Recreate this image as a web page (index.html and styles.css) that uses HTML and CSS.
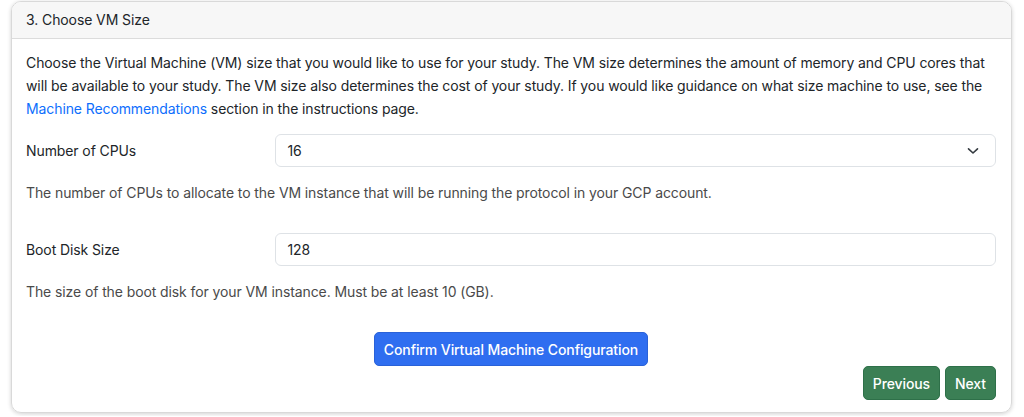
FILE: index.html
```html
<!DOCTYPE html>
<html>
<head>
<meta charset="utf-8">
<link rel="stylesheet" href="styles.css">
</head>
<body>
<div class="card">
  <div class="card-header">3. Choose VM Size</div>
  <div class="card-body">
    <p class="intro">Choose the Virtual Machine (VM) size that you would like to use for your study. The VM size determines the amount of memory and CPU cores that will be available to your study. The VM size also determines the cost of your study. If you would like guidance on what size machine to use, see the <a href="#">Machine Recommendations</a> section in the instructions page.</p>

    <div class="form-row">
      <label class="form-label">Number of CPUs</label>
      <div class="select">
        <span>16</span>
        <svg class="chev" width="12" height="8" viewBox="0 0 12 8"><path d="M1.5 1.8 L6 6 L10.5 1.8" fill="none" stroke="#343a40" stroke-width="1.6" stroke-linecap="round" stroke-linejoin="round"/></svg>
      </div>
    </div>
    <p class="help help-cpu">The number of CPUs to allocate to the VM instance that will be running the protocol in your GCP account.</p>

    <div class="form-row row-disk">
      <label class="form-label">Boot Disk Size</label>
      <div class="input">128</div>
    </div>
    <p class="help help-disk">The size of the boot disk for your VM instance. Must be at least 10 (GB).</p>

    <div class="confirm-wrap">
      <button class="btn btn-primary">Confirm Virtual Machine Configuration</button>
    </div>
    <div class="nav">
      <button class="btn btn-success">Previous</button>
      <button class="btn btn-success">Next</button>
    </div>
  </div>
</div>
</body>
</html>
```

FILE: styles.css
```css
html, body {
  margin: 0;
  padding: 0;
  background: #ffffff;
}
body {
  font-family: Inter, "Liberation Sans", Arial, sans-serif;
  font-size: 14px;
  letter-spacing: -0.1px;
  color: #212529;
  padding: 1px 12px 3px 11px;
}
.card {
  border: 1px solid #d9d9d9;
  border-radius: 10px;
  box-shadow: 0 1px 4px rgba(0,0,0,0.18);
  overflow: hidden;
  height: 412px;
  box-sizing: border-box;
}
.card-header {
  background: #f7f7f7;
  border-bottom: 1px solid #dcdcdc;
  padding: 7px 14px 8px;
  line-height: 21px;
}
.card-body {
  padding: 12px 15px 12px 14px;
  display: flex;
  flex-direction: column;
}
.intro {
  margin: 0;
  line-height: 23px;
}
.intro a {
  color: #0d6efd;
  text-decoration: none;
}
.form-row {
  display: grid;
  grid-template-columns: calc(25% - 18px) 1fr;
  column-gap: 24px;
  align-items: center;
  margin-top: 14px;
}
.row-disk {
  margin-top: 29px;
}
.form-label {
  line-height: 21px;
}
.select, .input {
  height: 33px;
  box-sizing: border-box;
  border: 1px solid #dee2e6;
  border-radius: 6px;
  padding: 0 12px;
  display: flex;
  align-items: center;
  justify-content: space-between;
  background: #fff;
}
.chev {
  margin-right: 4px;
}
.help {
  margin: 14px 0 0;
  line-height: 23px;
  color: #4a4a4a;
}
.confirm-wrap {
  display: flex;
  justify-content: center;
  margin-top: 29px;
}
.btn {
  font-family: inherit;
  font-size: 14px;
  font-weight: 500;
  letter-spacing: -0.1px;
  color: #fff;
  border-radius: 5px;
  height: 34px;
  padding: 0 9px;
  cursor: pointer;
}
.btn-primary {
  background: #2f6ef0;
  border: 1px solid #2a62d8;
}
.nav {
  display: flex;
  justify-content: flex-end;
  gap: 5px;
}
.btn-success {
  background: #3b7f55;
  border: 1px solid #2e7049;
}
```
